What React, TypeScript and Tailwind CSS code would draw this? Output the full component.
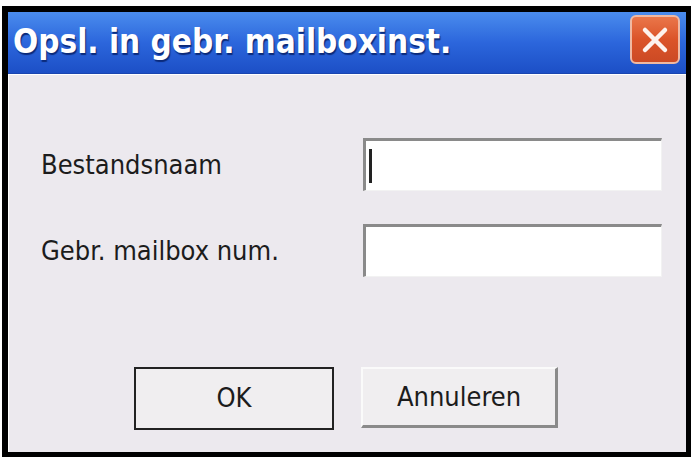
import React from 'react';

function CloseButton() {
  return (
    <div className="w-[50px] h-[49px] rounded-[6px] border-2 border-[#f0b9a2] bg-gradient-to-b from-[#ea7649] via-[#db5429] to-[#cc4a24] flex items-center justify-center">
      <svg width="30" height="30" viewBox="0 0 30 30">
        <path d="M5 5 L25 25 M25 5 L5 25" stroke="#fdf3ee" strokeWidth="4.5" strokeLinecap="round" />
      </svg>
    </div>
  );
}

function Field({ label, cursor }: { label: string; cursor?: boolean }) {
  return (
    <div className="flex items-center">
      <div className="w-[322px] text-[27px] text-[#1c1c1c] pt-[2px]">{label}</div>
      <div className="w-[299px] h-[53px] border-t-[3px] border-l-[3px] border-b border-r border-t-[#8a8a8a] border-l-[#8a8a8a] border-b-[#f2f2f2] border-r-[#f2f2f2] bg-white flex items-center pl-[3px]">
        {cursor && <div className="w-[3px] h-[34px] bg-[#222]" />}
      </div>
    </div>
  );
}

export default function App() {
  return (
    <div className="w-[698px] h-[459px] bg-white pt-[6px] pl-[2px]" style={{ fontFamily: '"DejaVu Sans Condensed", "DejaVu Sans", sans-serif' }}>
      <div className="w-[689px] h-[451px] border-l-[6px] border-t-[6px] border-r-[5px] border-b-[5px] border-black flex flex-col bg-[#ece9ee]">
        <div className="h-[62px] bg-gradient-to-b from-[#4b8ced] via-[#2c66dc] to-[#1c4fc6] flex items-start justify-between pl-[5px] pr-[6px] pt-[3px] border-b border-[#1a45b0]">
          <div className="text-[33px] font-bold text-white leading-[54px] [text-shadow:1px_2px_1px_#0b2a7a]">Opsl. in gebr. mailboxinst.</div>
          <CloseButton />
        </div>
        <div className="flex-1 flex flex-col pl-[32px] pt-[63px] border-l border-t border-white">
          <div className="flex flex-col gap-[33px]">
            <Field label="Bestandsnaam" cursor />
            <Field label="Gebr. mailbox num." />
          </div>
          <div className="flex gap-[27px] pl-[93px] mt-[90px]">
            <button className="w-[200px] h-[63px] border-2 border-[#222] bg-[#f0eef0] text-[27px] text-[#1c1c1c]">OK</button>
            <button className="w-[197px] h-[61px] border-t-2 border-l-2 border-b-[3px] border-r-[3px] border-t-[#fafafa] border-l-[#fafafa] border-b-[#8a8a8a] border-r-[#8a8a8a] bg-[#f0eef0] text-[27px] text-[#1c1c1c]">Annuleren</button>
          </div>
        </div>
      </div>
    </div>
  );
}
